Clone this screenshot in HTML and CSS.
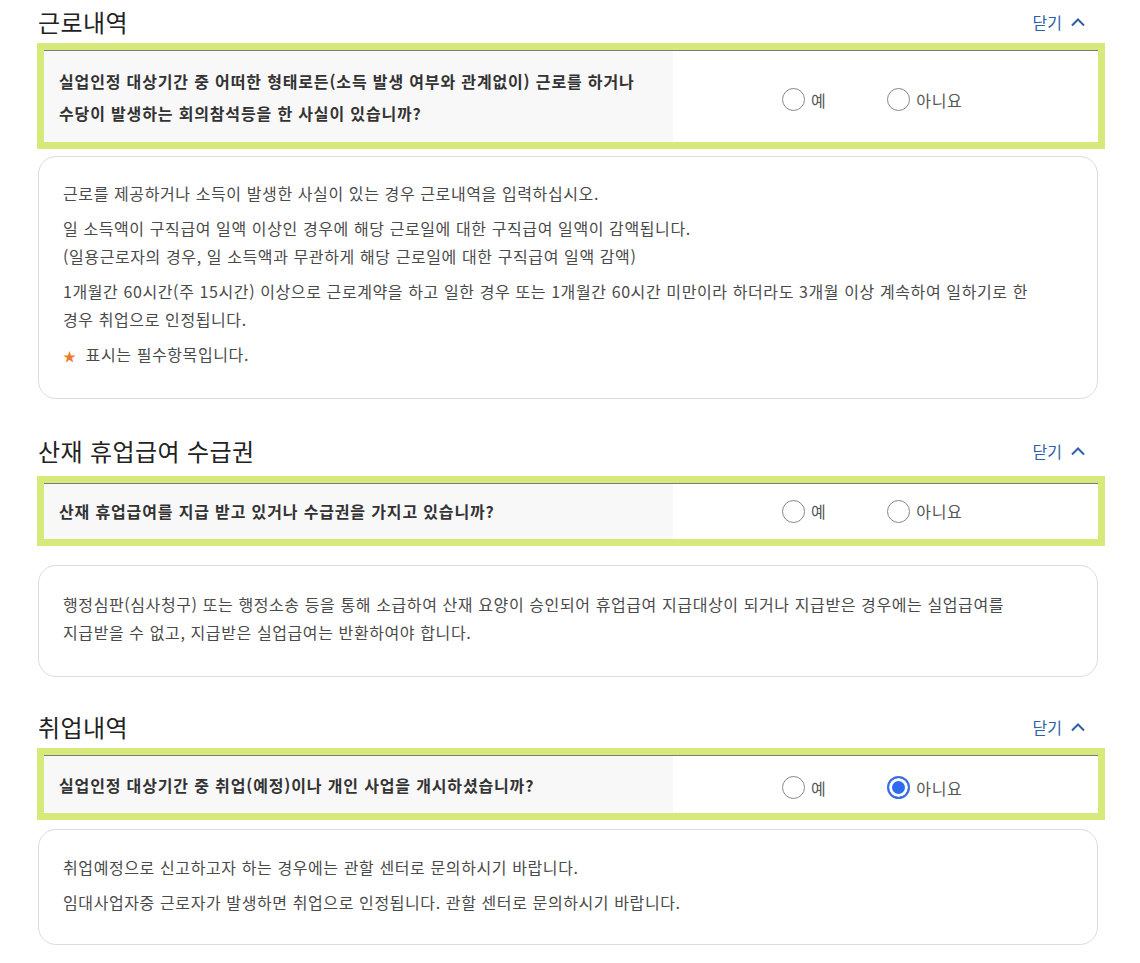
FILE: index.html
```html
<!DOCTYPE html>
<html lang="ko">
<head>
<meta charset="utf-8">
<title>근로내역</title>
<link rel="stylesheet" href="styles.css">
</head>
<body>
<div class="page">

  <section class="sec sec-first">
    <div class="sec-head">
      <h2 class="sec-title">근로내역</h2>
      <button class="toggle" type="button">닫기
        <svg class="chev" width="16" height="10" viewBox="0 0 16 10"><polyline points="2,8.5 8,2.5 14,8.5" fill="none" stroke="#2f5fa7" stroke-width="2"/></svg>
      </button>
    </div>
    <div class="q-box">
      <div class="q-text q-two">실업인정 대상기간 중 어떠한 형태로든(소득 발생 여부와 관계없이) 근로를 하거나<br>수당이 발생하는 회의참석등을 한 사실이 있습니까?</div>
      <div class="q-opts q-opts-low">
        <label class="opt"><span class="radio"></span>예</label>
        <label class="opt"><span class="radio"></span>아니요</label>
      </div>
    </div>
    <div class="info info-1">
      <p>근로를 제공하거나 소득이 발생한 사실이 있는 경우 근로내역을 입력하십시오.</p>
      <p>일 소득액이 구직급여 일액 이상인 경우에 해당 근로일에 대한 구직급여 일액이 감액됩니다.<br>(일용근로자의 경우, 일 소득액과 무관하게 해당 근로일에 대한 구직급여 일액 감액)</p>
      <p>1개월간 60시간(주 15시간) 이상으로 근로계약을 하고 일한 경우 또는 1개월간 60시간 미만이라 하더라도 3개월 이상 계속하여 일하기로 한<br>경우 취업으로 인정됩니다.</p>
      <p><span class="star">★</span>표시는 필수항목입니다.</p>
    </div>
  </section>

  <section class="sec sec-second">
    <div class="sec-head">
      <h2 class="sec-title">산재 휴업급여 수급권</h2>
      <button class="toggle" type="button">닫기
        <svg class="chev" width="16" height="10" viewBox="0 0 16 10"><polyline points="2,8.5 8,2.5 14,8.5" fill="none" stroke="#2f5fa7" stroke-width="2"/></svg>
      </button>
    </div>
    <div class="q-box q-box-2">
      <div class="q-text q-one">산재 휴업급여를 지급 받고 있거나 수급권을 가지고 있습니까?</div>
      <div class="q-opts">
        <label class="opt"><span class="radio"></span>예</label>
        <label class="opt"><span class="radio"></span>아니요</label>
      </div>
    </div>
    <div class="info info-2">
      <p>행정심판(심사청구) 또는 행정소송 등을 통해 소급하여 산재 요양이 승인되어 휴업급여 지급대상이 되거나 지급받은 경우에는 실업급여를<br>지급받을 수 없고, 지급받은 실업급여는 반환하여야 합니다.</p>
    </div>
  </section>

  <section class="sec sec-third">
    <div class="sec-head">
      <h2 class="sec-title">취업내역</h2>
      <button class="toggle" type="button">닫기
        <svg class="chev" width="16" height="10" viewBox="0 0 16 10"><polyline points="2,8.5 8,2.5 14,8.5" fill="none" stroke="#2f5fa7" stroke-width="2"/></svg>
      </button>
    </div>
    <div class="q-box">
      <div class="q-text q-one q-tall">실업인정 대상기간 중 취업(예정)이나 개인 사업을 개시하셨습니까?</div>
      <div class="q-opts q-opts-low">
        <label class="opt"><span class="radio"></span>예</label>
        <label class="opt"><span class="radio checked"></span>아니요</label>
      </div>
    </div>
    <div class="info info-3">
      <p>취업예정으로 신고하고자 하는 경우에는 관할 센터로 문의하시기 바랍니다.</p>
      <p>임대사업자중 근로자가 발생하면 취업으로 인정됩니다. 관할 센터로 문의하시기 바랍니다.</p>
    </div>
  </section>

</div>
</body>
</html>
```

FILE: styles.css
```css
* { box-sizing: border-box; }
html, body { margin: 0; padding: 0; background: #fff; }
body {
  font-family: "Noto Sans CJK KR", "Noto Sans", sans-serif;
  color: #333;
}
.page {
  width: 1140px;
  padding-left: 38px;
}
.sec { width: 1060px; }
.sec-second { margin-top: 30px; }
.sec-third { margin-top: 28px; }

.sec-head {
  height: 43px;
  display: flex;
  align-items: center;
  justify-content: space-between;
}
.sec-title {
  margin: 0;
  font-size: 24px;
  font-weight: 400;
  color: #222;
  line-height: 32px;
  letter-spacing: 0.4px;
}
.toggle {
  border: 0;
  background: none;
  padding: 0;
  margin-right: 12px;
  font-family: inherit;
  font-size: 16px;
  color: #2f5fa7;
  display: flex;
  align-items: center;
  gap: 8px;
  cursor: pointer;
}
.chev { display: block; }

.q-box {
  margin: 0 -7px 0 -1px;
  border: 7px solid #d5ea7a;
  display: flex;
  background: #fff;
  position: relative;
}
.q-box-2 { margin-top: 4px; }
.q-box::before {
  content: "";
  position: absolute;
  left: 0; right: 0; top: 0;
  height: 1px;
  background: #7a7a7a;
}
.q-text {
  width: 629px;
  background: #f8f8f8;
  padding: 15px 15px 13px;
  font-size: 16px;
  font-weight: 700;
  line-height: 32px;
  color: #333;
  letter-spacing: 0.85px;
}
.q-one { padding: 12px 15px; }
.q-tall { padding: 14px 15px 12px; }
.q-opts {
  flex: 1;
  display: flex;
  align-items: center;
  padding-left: 109px;
  gap: 61px;
}
.q-opts-low { padding-top: 7px; }
.opt {
  display: flex;
  align-items: center;
  gap: 6px;
  font-size: 16px;
  letter-spacing: 0.6px;
  color: #555;
}
.radio {
  width: 23px;
  height: 23px;
  border: 1.5px solid #888;
  border-radius: 50%;
  background: #fff;
  display: block;
}
.radio.checked {
  border: 2px solid #3b6fe0;
  background: #2f6bf0;
  box-shadow: inset 0 0 0 3px #fff;
}

.info {
  border: 1.5px solid #dcdcdc;
  border-radius: 18px;
  padding: 22px 24px 28px;
  font-size: 16px;
  letter-spacing: 0.6px;
  color: #4a4a4a;
}
.info-1 { margin-top: 7px; }
.info-2 { margin-top: 19px; padding: 24px 24px 30px; }
.info-3 { margin-top: 9px; padding-top: 23px; }
.info p {
  margin: 0;
  line-height: 28px;
}
.info p + p { margin-top: 7px; }
.star {
  color: #f07a2a;
  font-size: 13px;
  margin-right: 9px;
}
```
